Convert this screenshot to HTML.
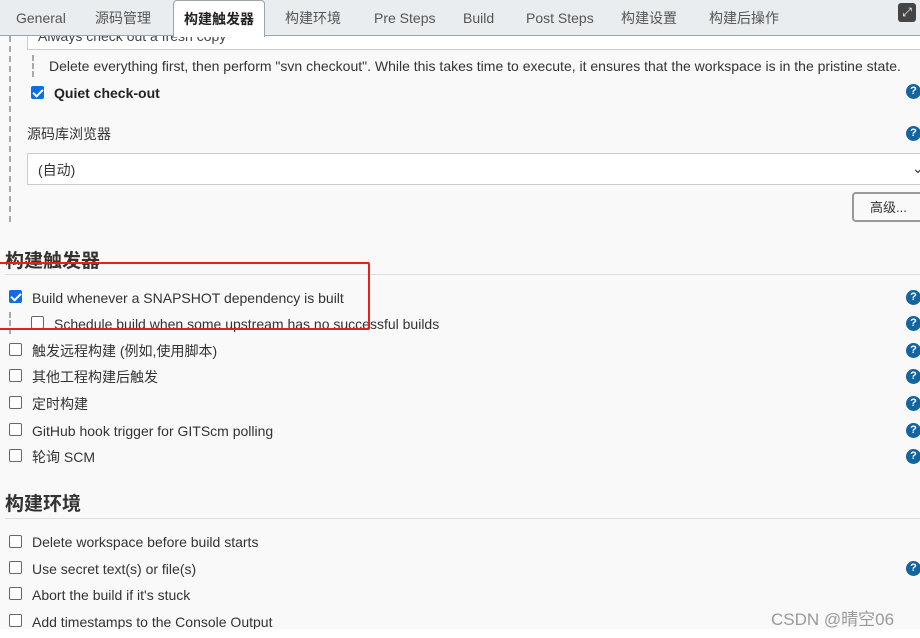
<!DOCTYPE html>
<html><head><meta charset="utf-8"><style>
*{box-sizing:border-box;margin:0;padding:0}
body{width:920px;height:638px;overflow:hidden;background:#f9f9f9;font-family:"Liberation Sans","Noto Sans CJK SC",sans-serif;font-size:14px;line-height:16px;color:#333;position:relative}
.a{position:absolute;white-space:nowrap;line-height:16px}
.tabs{position:absolute;left:0;top:0;width:920px;height:36px;background:#e9edf0;border-bottom:1px solid #9aa5ae}
.tab{position:absolute;top:10px;color:#555;font-size:14px;line-height:16px;white-space:nowrap}
.act{position:absolute;left:173px;top:0;width:92px;height:37px;background:#fff;border:1px solid #9aa5ae;border-bottom:none;border-radius:4px 4px 0 0;font-weight:bold;color:#222;text-align:center;padding-top:10px;line-height:16px}
.cb{position:absolute;width:13px;height:13px;border:1px solid #666;border-radius:2px;background:#fff}
.cb.on{background:#0b6ee6;border-color:#0b6ee6}
.cb.on::after{content:"";position:absolute;left:3px;top:0px;width:4px;height:8px;border:solid #fff;border-width:0 2px 2px 0;transform:rotate(45deg)}
.q{position:absolute;left:906px;width:15px;height:15px;border-radius:50%;background:#12659e;color:#fff;font-size:11px;font-weight:bold;text-align:center;line-height:15px}
h2{position:absolute;left:5px;font-size:19px;line-height:22px;font-weight:bold;color:#333}
.hr{position:absolute;left:5px;right:0;height:1px;background:#ddd}
.dash{position:absolute;border-left:2px dashed #aaa}
</style></head><body>
<div class="dash" style="left:9px;top:36px;height:186px"></div>
<div class="a" style="left:27px;top:20px;width:900px;height:30px;background:#fff;border:1px solid #ccc;padding:9px 10px;color:#444;line-height:12px">Always check out a fresh copy</div>
<div class="tabs">
<div class="tab" style="left:16px">General</div>
<div class="tab" style="left:95px">源码管理</div>
<div class="act">构建触发器</div>
<div class="tab" style="left:285px">构建环境</div>
<div class="tab" style="left:374px">Pre Steps</div>
<div class="tab" style="left:463px">Build</div>
<div class="tab" style="left:526px">Post Steps</div>
<div class="tab" style="left:621px">构建设置</div>
<div class="tab" style="left:709px">构建后操作</div>
<div class="a" style="left:898px;top:3px;width:18px;height:19px;background:#444;border-radius:3px;color:#fff;font-size:12px;text-align:center;line-height:19px">⤢</div>
</div>
<div style="position:absolute;left:32px;top:55px;height:22px;border-left:2px dashed #aaa"></div>
<div class="a" style="left:49px;top:58px;color:#333">Delete everything first, then perform "svn checkout". While this takes time to execute, it ensures that the workspace is in the pristine state.</div>
<div class="cb on" style="left:31px;top:86px"></div>
<div class="a" style="left:54px;top:85px;font-weight:bold;color:#222">Quiet check-out</div>
<div class="q" style="top:84px">?</div>
<div class="a" style="left:27px;top:126px">源码库浏览器</div>
<div class="q" style="top:126px">?</div>
<div class="a" style="left:27px;top:153px;width:900px;height:32px;background:#fff;border:1px solid #ccc;padding:8px 10px">(自动)<span style="position:absolute;left:884px;top:6px">⌄</span></div>
<div class="a" style="left:852px;top:192px;width:72px;height:30px;border:2px solid #999;border-radius:4px;background:#f9f9f9;padding:6px 0 0 16px;font-size:13px">高级...</div>
<h2 style="top:251px">构建触发器</h2>
<div class="hr" style="top:274px"></div>
<div class="cb on" style="left:9px;top:290px"></div><div class="a" style="left:32px;top:290px">Build whenever a SNAPSHOT dependency is built</div><div class="q" style="top:290px">?</div>
<div class="dash" style="left:9px;top:312px;height:22px"></div>
<div class="cb" style="left:31px;top:316px"></div><div class="a" style="left:54px;top:316px">Schedule build when some upstream has no successful builds</div><div class="q" style="top:316px">?</div>
<div class="cb" style="left:9px;top:343px"></div><div class="a" style="left:32px;top:343px">触发远程构建 (例如,使用脚本)</div><div class="q" style="top:343px">?</div>
<div class="cb" style="left:9px;top:369px"></div><div class="a" style="left:32px;top:369px">其他工程构建后触发</div><div class="q" style="top:369px">?</div>
<div class="cb" style="left:9px;top:396px"></div><div class="a" style="left:32px;top:396px">定时构建</div><div class="q" style="top:396px">?</div>
<div class="cb" style="left:9px;top:423px"></div><div class="a" style="left:32px;top:423px">GitHub hook trigger for GITScm polling</div><div class="q" style="top:423px">?</div>
<div class="cb" style="left:9px;top:449px"></div><div class="a" style="left:32px;top:449px">轮询 SCM</div><div class="q" style="top:449px">?</div>
<div style="position:absolute;left:-4px;top:262px;width:374px;height:68px;border:2px solid #e8201c;border-radius:2px"></div>
<h2 style="top:494px">构建环境</h2>
<div class="hr" style="top:518px"></div>
<div class="cb" style="left:9px;top:535px"></div><div class="a" style="left:32px;top:534px">Delete workspace before build starts</div>
<div class="cb" style="left:9px;top:561px"></div><div class="a" style="left:32px;top:561px">Use secret text(s) or file(s)</div><div class="q" style="top:561px">?</div>
<div class="cb" style="left:9px;top:587px"></div><div class="a" style="left:32px;top:587px">Abort the build if it's stuck</div>
<div class="cb" style="left:9px;top:614px"></div><div class="a" style="left:32px;top:614px">Add timestamps to the Console Output</div>
<div class="a" style="left:771px;top:610px;font-size:17px;line-height:20px;color:#999">CSDN @晴空06</div>
<div class="a" style="left:0;top:629px;width:920px;height:9px;background:#fff"></div>
</body></html>
